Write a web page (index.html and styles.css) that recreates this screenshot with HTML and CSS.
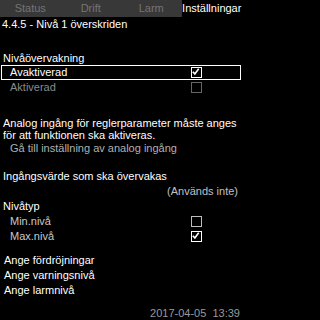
FILE: index.html
```html
<!DOCTYPE html>
<html lang="sv">
<head>
<meta charset="utf-8">
<link rel="stylesheet" href="styles.css">
</head>
<body>
<div class="screen">
  <nav class="tabs">
    <span class="tab">Status</span>
    <span class="tab">Drift</span>
    <span class="tab">Larm</span>
    <span class="tab active">Inställningar</span>
  </nav>
  <div class="title">4.4.5 - Nivå 1 överskriden</div>

  <div class="heading first">Nivåövervakning</div>
  <div class="option selected">
    <span>Avaktiverad</span>
    <span class="cb on"><svg viewBox="0 0 11 11"><path d="M2 5.5 L4.5 8.2 L9.2 2"/></svg></span>
  </div>
  <div class="option disabled">
    <span>Aktiverad</span>
    <span class="cb"></span>
  </div>

  <p class="note">Analog ingång för reglerparameter måste anges för att funktionen ska aktiveras.</p>
  <div class="link">Gå till inställning av analog ingång</div>

  <div class="heading gap">Ingångsvärde som ska övervakas</div>
  <div class="value">(Används inte)</div>

  <div class="heading">Nivåtyp</div>
  <div class="option sub first-sub">
    <span>Min.nivå</span>
    <span class="cb light"></span>
  </div>
  <div class="option sub">
    <span>Max.nivå</span>
    <span class="cb on"><svg viewBox="0 0 11 11"><path d="M2 5.5 L4.5 8.2 L9.2 2"/></svg></span>
  </div>

  <div class="menu">
    <div class="menu-item">Ange fördröjningar</div>
    <div class="menu-item">Ange varningsnivå</div>
    <div class="menu-item">Ange larmnivå</div>
  </div>

  <div class="footer">2017-04-05&nbsp;&nbsp;13:39</div>
</div>
</body>
</html>
```
FILE: styles.css
```css
html, body {
  margin: 0;
  padding: 0;
  background: #000;
}
.screen {
  width: 242px;
  height: 320px;
  overflow: hidden;
  display: flex;
  flex-direction: column;
  font-family: "Liberation Sans", Arial, sans-serif;
  font-size: 11px;
  color: #fff;
}
.tabs {
  display: grid;
  grid-template-columns: repeat(4, 1fr);
  height: 17px;
  background: #383838;
  flex: none;
}
.tab {
  text-align: center;
  line-height: 17px;
  color: #747474;
  white-space: nowrap;
}
.tab.active {
  background: #000;
  color: #fff;
}
.title {
  line-height: 15px;
  padding-left: 2px;
}
.heading {
  line-height: 14px;
  padding-left: 3px;
}
.heading.first { margin-top: 19px; }
.heading.gap { margin-top: 13px; line-height: 15px; }
.option {
  display: flex;
  align-items: center;
  height: 13px;
  line-height: 13px;
  margin: 0 1px;
  border: 1px solid transparent;
  padding-left: 8px;
  padding-right: 38px;
}
.option .cb { margin-left: auto; }
.option.selected { border-color: #fff; }
.option.disabled { color: #8a8a8a; }
.option.sub { color: #c8c8c8; }
.option.first-sub { margin-top: 1px; }
.cb {
  width: 9px;
  height: 9px;
  border: 1px solid #666;
  display: flex;
}
.cb.light { border-color: #bdbdbd; }
.cb.on { border-color: #fff; }
.cb svg {
  width: 9px;
  height: 9px;
}
.cb svg path {
  fill: none;
  stroke: #fff;
  stroke-width: 2;
  transform: translate(-1px, -1px);
}
.note {
  margin: 22px 0 0 0;
  padding-left: 3px;
  line-height: 12px;
}
.link {
  line-height: 15px;
  padding-left: 10px;
  color: #b0b0b0;
}
.value {
  line-height: 15px;
  text-align: right;
  padding-right: 4px;
  color: #c0c0c0;
}
.menu {
  margin-top: 9px;
  padding-left: 4px;
}
.menu-item { line-height: 15px; }
.footer {
  margin-top: auto;
  line-height: 13px;
  text-align: right;
  padding-right: 2px;
  color: #9a9a9a;
}
```
